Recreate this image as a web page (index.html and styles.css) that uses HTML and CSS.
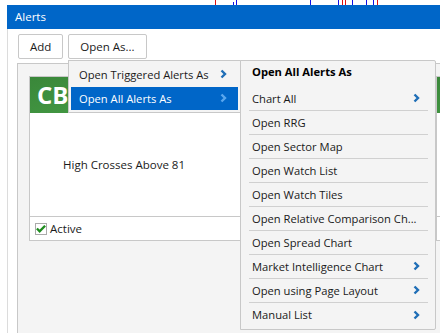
FILE: index.html
```
<!DOCTYPE html>
<html>
<head>
<meta charset="utf-8">
<title>Alerts</title>
<link rel="stylesheet" href="styles.css">
</head>
<body>
	<div class="ticks">
		<span class="tick red" style="left: 215px"></span>
		<span class="tick blue short" style="left: 233px"></span>
		<span class="tick blue" style="left: 236px"></span>
		<span class="tick blue" style="left: 310px"></span>
		<span class="tick blue" style="left: 338px"></span>
		<span class="tick red" style="left: 342px"></span>
		<span class="tick red" style="left: 345px"></span>
		<span class="tick blue" style="left: 352px"></span>
		<span class="tick blue" style="left: 366px"></span>
		<span class="tick blue" style="left: 373px"></span>
		<span class="tick red" style="left: 377px"></span>
	</div>

	<div class="window">
		<div class="titlebar">Alerts</div>
		<div class="toolbar">
			<button class="btn">Add</button>
			<button class="btn">Open As...</button>
		</div>
		<div class="panel">
			<div class="card">
				<div class="card-head">CB</div>
				<div class="card-body">High Crosses Above 81</div>
				<div class="card-foot"><span class="check"><svg width="11" height="9" viewBox="0 0 11 9"><polyline points="1,4.5 4,7.5 10,1.5" fill="none" stroke="#1e8c1e" stroke-width="2.6"/></svg></span>Active</div>
			</div>
			<div class="card">
				<div class="card-head"></div>
				<div class="card-body"></div>
				<div class="card-foot"></div>
			</div>
		</div>
	</div>

	<!-- open-as menu -->
	<div class="menu menu-main">
		<div class="mitem">Open Triggered Alerts As<svg class="chev" width="7" height="10" viewBox="0 0 7 10"><polyline points="1.5,1.5 5,5 1.5,8.5" fill="none" stroke="#1f6eb6" stroke-width="2.4"/></svg></div>
		<div class="mitem active">Open All Alerts As<svg class="chev" width="7" height="10" viewBox="0 0 7 10"><polyline points="1.5,1.5 5,5 1.5,8.5" fill="none" stroke="#5aa7ee" stroke-width="2.4"/></svg></div>
	</div>

	<div class="menu menu-sub">
		<div class="sub-head">Open All Alerts As</div>
		<div class="sitem">Chart All<svg class="chev" width="7" height="10" viewBox="0 0 7 10"><polyline points="1.5,1.5 5,5 1.5,8.5" fill="none" stroke="#1f6eb6" stroke-width="2.4"/></svg></div>
		<div class="sitem">Open RRG</div>
		<div class="sitem">Open Sector Map</div>
		<div class="sitem">Open Watch List</div>
		<div class="sitem">Open Watch Tiles</div>
		<div class="sitem">Open Relative Comparison Ch...</div>
		<div class="sitem">Open Spread Chart</div>
		<div class="sitem">Market Intelligence Chart<svg class="chev" width="7" height="10" viewBox="0 0 7 10"><polyline points="1.5,1.5 5,5 1.5,8.5" fill="none" stroke="#1f6eb6" stroke-width="2.4"/></svg></div>
		<div class="sitem">Open using Page Layout<svg class="chev" width="7" height="10" viewBox="0 0 7 10"><polyline points="1.5,1.5 5,5 1.5,8.5" fill="none" stroke="#1f6eb6" stroke-width="2.4"/></svg></div>
		<div class="sitem">Manual List<svg class="chev" width="7" height="10" viewBox="0 0 7 10"><polyline points="1.5,1.5 5,5 1.5,8.5" fill="none" stroke="#1f6eb6" stroke-width="2.4"/></svg></div>
	</div>
</body>
</html>
```

FILE: styles.css
```
html, body {
	margin: 0;
	height: 100%;
	overflow: hidden;
	background: #fff;
	font-family: "Open Sans", "Liberation Sans", sans-serif;
	font-size: 11px;
	color: #1a1a1a;
}

.ticks {
	position: relative;
	height: 5px;
}

.tick {
	position: absolute;
	top: 0;
	width: 1px;
	height: 5px;
}

.tick.short {
	top: 2px;
	height: 3px;
}

.red {
	background: #e01010;
}

.blue {
	background: #1010e8;
}

.window {
	margin-left: 7px;
	height: 328px;
	display: flex;
	flex-direction: column;
	border-left: 1px solid #dcdcdc;
}

.titlebar {
	height: 24px;
	line-height: 24px;
	padding-left: 8px;
	margin-left: -1px;
	background: #0066c8;
	color: #fff;
	font-size: 11.5px;
}

.toolbar {
	display: flex;
	gap: 5px;
	padding: 5px 10px 4px;
}

.btn {
	height: 25px;
	padding: 0 11px;
	background: #fff;
	border: 1px solid #c8c8c8;
	border-radius: 2px;
	font-family: inherit;
	font-size: 11.5px;
	color: #1a1a1a;
}

.panel {
	flex: 1;
	margin-left: 9px;
	display: flex;
	gap: 10px;
	padding: 12px 11px;
	background: #f4f4f4;
	border-left: 1px solid #c8c8c8;
	border-top: 1px solid #c8c8c8;
	overflow: hidden;
}

.card {
	flex: none;
	width: 395px;
	height: 163px;
	display: flex;
	flex-direction: column;
	background: #fff;
	border: 1px solid #c8c8c8;
}

.card-head {
	height: 36px;
	line-height: 36px;
	padding-left: 7px;
	background: linear-gradient(160deg, #3a873a 0%, #4aa84a 60%, #5bb85b 100%);
	color: #fff;
	font-size: 24px;
	font-weight: bold;
}

.card-body {
	flex: 1;
	display: flex;
	align-items: center;
	padding-left: 33px;
	font-size: 11.5px;
	border-bottom: 1px solid #c8c8c8;
}

.card-foot {
	height: 23px;
	display: flex;
	align-items: center;
	padding-left: 5px;
	font-size: 11.5px;
}

.check {
	width: 10px;
	height: 10px;
	margin-right: 3px;
	display: flex;
	align-items: center;
	justify-content: center;
	border: 1px solid #aaa;
	background: #fff;
}

.menu {
	position: absolute;
	top: 60px;
	background: #f4f4f4;
	border: 1px solid #c8c8c8;
	box-sizing: border-box;
	font-size: 11.2px;
	white-space: nowrap;
}

.menu-main {
	left: 68px;
	width: 173px;
	padding: 2px 2px 1px;
}

.mitem {
	height: 23px;
	margin-bottom: 1px;
	display: flex;
	align-items: center;
	justify-content: space-between;
	padding: 0 11px 1px 8px;
	box-sizing: border-box;
}

.mitem.active {
	background: #0066c8;
	color: #fff;
}

.menu-sub {
	left: 240px;
	width: 196px;
	height: 270px;
	padding: 0 7px 0 8px;
	border-radius: 0 2px 2px 0;
}

.sub-head {
	height: 26px;
	line-height: 21px;
	padding-left: 3px;
	font-weight: bold;
	color: #000;
}

.sitem {
	height: 24px;
	display: flex;
	align-items: center;
	justify-content: space-between;
	padding: 0 8px 1px 3px;
	box-sizing: border-box;
	border-bottom: 1px solid #d0d0d0;
}

.sitem:last-child {
	border-bottom: none;
}
```
